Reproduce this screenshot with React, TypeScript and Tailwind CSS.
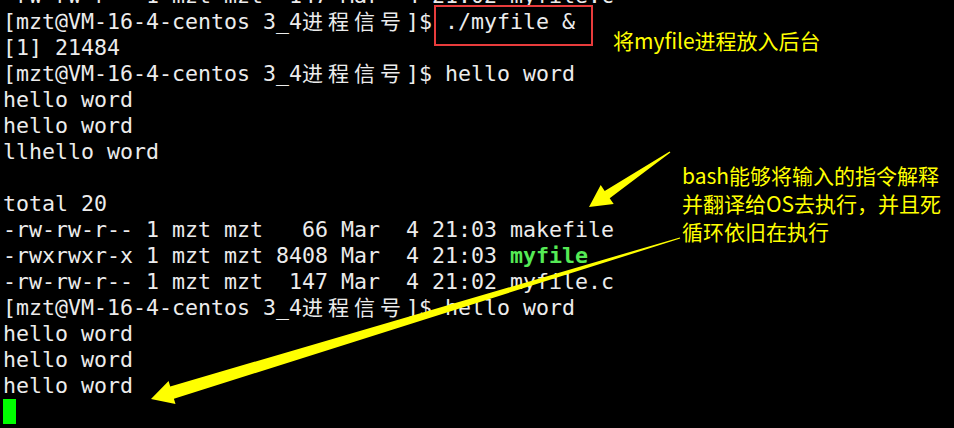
const mono = "font-['DejaVu_Sans_Mono',monospace]";

type Seg = { text: string; kind?: 'cjk' | 'exec' };

const prompt: Seg[] = [
  { text: '[mzt@VM-16-4-centos 3_4' },
  { text: '进程信号', kind: 'cjk' },
  { text: ']$ ' },
];

const listing = (size: string, time: string, name: Seg): Seg[] => [
  { text: `${size} 1 mzt mzt ` },
  { text: time },
  name,
];

const lines: Seg[][] = [
  [{ text: '-rw-rw-r-- 1 mzt mzt  147 Mar  4 21:02 myfile.c' }],
  [...prompt, { text: './myfile &' }],
  [{ text: '[1] 21484' }],
  [...prompt, { text: 'hello word' }],
  [{ text: 'hello word' }],
  [{ text: 'hello word' }],
  [{ text: 'llhello word' }],
  [],
  [{ text: 'total 20' }],
  listing('-rw-rw-r--', '  66 Mar  4 21:03 ', { text: 'makefile' }),
  listing('-rwxrwxr-x', '8408 Mar  4 21:03 ', { text: 'myfile', kind: 'exec' }),
  listing('-rw-rw-r--', ' 147 Mar  4 21:02 ', { text: 'myfile.c' }),
  [...prompt, { text: 'hello word' }],
  [{ text: 'hello word' }],
  [{ text: 'hello word' }],
  [{ text: 'hello word' }],
];

function Segment({ seg }: { seg: Seg }) {
  if (seg.kind === 'cjk') {
    // terminal draws each CJK glyph across two cells (26px)
    return (
      <span className="font-['Noto_Sans_CJK_SC',sans-serif] text-[21px] leading-[0] tracking-[5px]">
        {seg.text}
      </span>
    );
  }
  if (seg.kind === 'exec') {
    return <span className="font-bold text-[#55ea55]">{seg.text}</span>;
  }
  return <span>{seg.text}</span>;
}

export default function App() {
  return (
    <div className="relative h-[428px] w-[954px] overflow-hidden bg-black">
      {/* Terminal output */}
      <div className={`${mono} mt-[-17px] pl-[3px] text-[21.6px] leading-[26px] text-[#ececec] whitespace-pre`}>
        {lines.map((line, i) => (
          <div key={i} className="h-[26px]">
            {line.map((seg, j) => (
              <Segment key={j} seg={seg} />
            ))}
          </div>
        ))}
        <div className="flex h-[26px] items-start">
          <div className="h-[25px] w-[13px] bg-[#00ff00]" />
        </div>
      </div>

      {/* Highlight box */}
      <div className="absolute left-[434px] top-[5px] h-[41px] w-[159px] border-2 border-[#e83c3c]" />

      {/* Annotations */}
      <div className="absolute left-[613px] top-[26px] font-['Noto_Sans_CJK_SC',sans-serif] text-[21px] leading-[28px] text-[#ffff00]">
        将myfile进程放入后台
      </div>
      <div className="absolute left-[682px] top-[161px] font-['Noto_Sans_CJK_SC',sans-serif] text-[21px] leading-[28px] text-[#ffff00]">
        <div>bash能够将输入的指令解释</div>
        <div>并翻译给OS去执行，并且死</div>
        <div>循环依旧在执行</div>
      </div>

      {/* Arrows */}
      <svg className="pointer-events-none absolute inset-0" width="954" height="428" viewBox="0 0 954 428">
        <polygon
          fill="#ffff00"
          points="669.6,151.4 604.7,190.9 600.7,185.1 589,207 613.7,204.1 609.7,198.3 670.4,152.6"
        />
        <polygon
          fill="#ffff00"
          points="679.8,237.4 170.2,386.4 168.6,381.1 151,399 175.5,404.1 173.9,398.8 680.2,238.6"
        />
      </svg>
    </div>
  );
}
